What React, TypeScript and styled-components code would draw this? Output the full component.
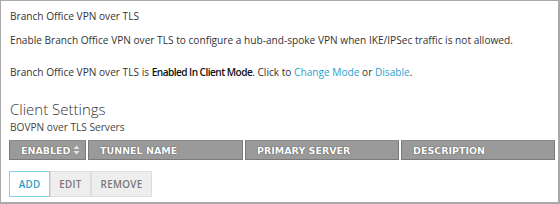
import * as React from 'react'
import styled, { createGlobalStyle } from 'styled-components'

const GlobalStyle = createGlobalStyle`
  html, body {
    margin: 0;
    padding: 0;
    background: #ffffff;
  }
  body {
    font-family: 'Open Sans', 'Liberation Sans', sans-serif;
    color: #333333;
  }
`

const Frame = styled.div`
  box-sizing: border-box;
  width: 560px;
  height: 204px;
  border: 1px solid #a9a9a9;
  border-right-width: 2px;
  border-bottom-width: 2px;
  padding: 7px 3px 0 8px;
  display: flex;
  flex-direction: column;
  overflow: hidden;

  & > * {
    flex-shrink: 0;
  }
`

const Line = styled.p<{ gap?: number }>`
  margin: ${({ gap }) => gap ?? 0}px 0 0 1px;
  font-size: 10.15px;
  line-height: 16px;
  color: #333;
  white-space: nowrap;
`

const Strong = styled.strong`
  font-weight: 600;
  letter-spacing: -0.55px;
  color: #111;
`

const Link = styled.a`
  color: #2a9fd0;
  text-decoration: none;
  cursor: pointer;
`

const SectionTitle = styled.h2`
  margin: 20px 0 0 1px;
  font-size: 15px;
  font-weight: 300;
  line-height: 18px;
  color: #333;
`

const SubTitle = styled.div`
  margin: 1px 0 0 1px;
  font-size: 10.15px;
  line-height: 16px;
  color: #444;
`

const HeaderRow = styled.div`
  margin-top: 5px;
  display: grid;
  grid-template-columns: 77px 155px 154px 1fr;
  column-gap: 2px;
  height: 20px;
`

const HeaderCell = styled.div`
  box-sizing: border-box;
  background: #9a9a9a;
  border: 1px solid #7a7a7a;
  border-top-color: #8a8a8a;
  padding-left: 11px;
  display: flex;
  align-items: center;
  gap: 3px;
  font-family: 'DejaVu Sans', Verdana, sans-serif;
  font-size: 9.5px;
  font-weight: 700;
  color: #ffffff;
  text-shadow: 0 0 1px #555, 0 0 1px #555;
  white-space: nowrap;
`

const SortIcon = styled.svg`
  width: 7px;
  height: 10px;
`

const ButtonBar = styled.div`
  margin-top: 11px;
  display: flex;
`

const Button = styled.button<{ primary?: boolean; w: number }>`
  box-sizing: border-box;
  width: ${({ w }) => w}px;
  height: 26px;
  padding: 0;
  border: 1px solid ${({ primary }) => (primary ? '#86d3e6' : '#dddddd')};
  background: ${({ primary }) => (primary ? '#ffffff' : '#eeeeee')};
  color: ${({ primary }) => (primary ? '#2a9fc8' : '#777777')};
  font-family: 'Open Sans', 'Liberation Sans', sans-serif;
  font-size: 9.8px;
  font-weight: 600;
  letter-spacing: 0.3px;
  text-align: center;
  cursor: pointer;
`

const columns = ['ENABLED', 'TUNNEL NAME', 'PRIMARY SERVER', 'DESCRIPTION']

export default function App() {
  return (
    <>
      <GlobalStyle />
      <Frame>
        <Line>Branch Office VPN over TLS</Line>
        <Line gap={8}>
          Enable Branch Office VPN over TLS to configure a hub-and-spoke VPN when IKE/IPSec traffic is not allowed.
        </Line>
        <Line gap={16}>
          Branch Office VPN over TLS is <Strong>Enabled In Client Mode</Strong>. Click to{' '}
          <Link>Change Mode</Link> or <Link>Disable</Link>.
        </Line>
        <SectionTitle>Client Settings</SectionTitle>
        <SubTitle>BOVPN over TLS Servers</SubTitle>
        <HeaderRow>
          {columns.map((col, i) => (
            <HeaderCell key={col}>
              {col}
              {i === 0 && (
                <SortIcon viewBox="0 0 7 10">
                  <path d="M3.5 0.5 L6.5 4 L0.5 4 Z" fill="#e4e4e4" />
                  <path d="M3.5 9.5 L6.5 6 L0.5 6 Z" fill="#e4e4e4" />
                </SortIcon>
              )}
            </HeaderCell>
          ))}
        </HeaderRow>
        <ButtonBar>
          <Button primary w={41}>ADD</Button>
          <Button w={41}>EDIT</Button>
          <Button w={61}>REMOVE</Button>
        </ButtonBar>
      </Frame>
    </>
  )
}
